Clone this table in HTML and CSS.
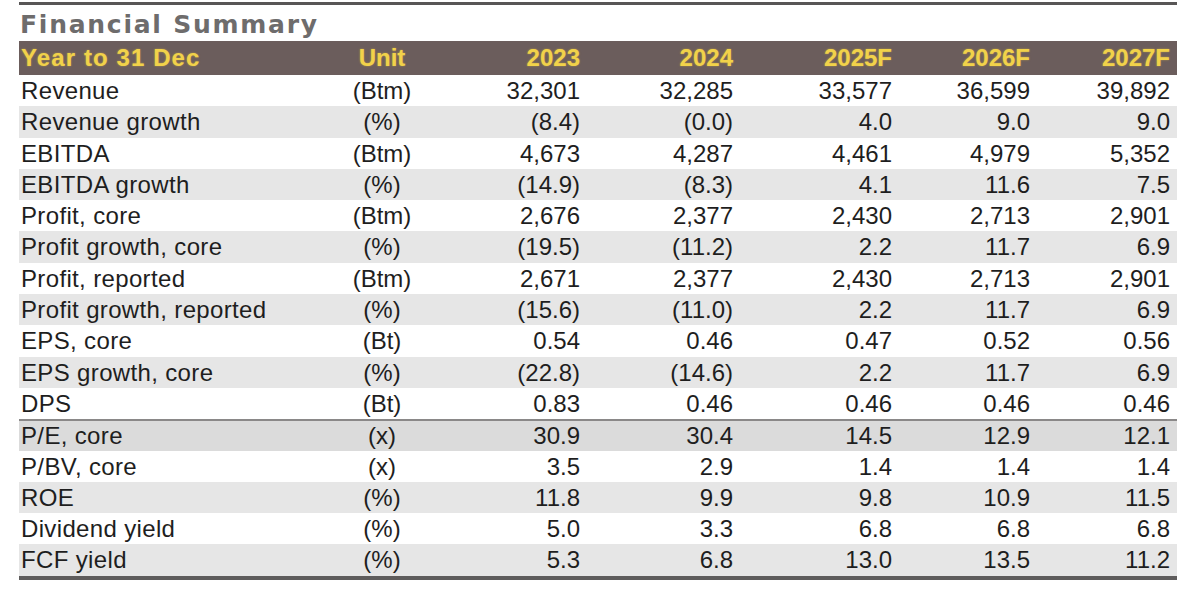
FILE: index.html
```html
<!DOCTYPE html>
<html>
<head>
<meta charset="utf-8">
<link rel="stylesheet" href="styles.css">
</head>
<body>
<div class="sheet">
  <div class="title">Financial Summary</div>
  <div class="table">
    <div class="row head">
      <div class="lab wide">Year to 31 Dec</div><div class="unit">Unit</div>
      <div class="num">2023</div><div class="num">2024</div><div class="num">2025F</div><div class="num">2026F</div><div class="num">2027F</div>
    </div>
    <div class="row">
      <div class="lab">Revenue</div><div class="unit">(Btm)</div>
      <div class="num">32,301</div><div class="num">32,285</div><div class="num">33,577</div><div class="num">36,599</div><div class="num">39,892</div>
    </div>
    <div class="row alt">
      <div class="lab">Revenue growth</div><div class="unit">(%)</div>
      <div class="num">(8.4)</div><div class="num">(0.0)</div><div class="num">4.0</div><div class="num">9.0</div><div class="num">9.0</div>
    </div>
    <div class="row">
      <div class="lab">EBITDA</div><div class="unit">(Btm)</div>
      <div class="num">4,673</div><div class="num">4,287</div><div class="num">4,461</div><div class="num">4,979</div><div class="num">5,352</div>
    </div>
    <div class="row alt">
      <div class="lab">EBITDA growth</div><div class="unit">(%)</div>
      <div class="num">(14.9)</div><div class="num">(8.3)</div><div class="num">4.1</div><div class="num">11.6</div><div class="num">7.5</div>
    </div>
    <div class="row">
      <div class="lab">Profit, core</div><div class="unit">(Btm)</div>
      <div class="num">2,676</div><div class="num">2,377</div><div class="num">2,430</div><div class="num">2,713</div><div class="num">2,901</div>
    </div>
    <div class="row alt">
      <div class="lab">Profit growth, core</div><div class="unit">(%)</div>
      <div class="num">(19.5)</div><div class="num">(11.2)</div><div class="num">2.2</div><div class="num">11.7</div><div class="num">6.9</div>
    </div>
    <div class="row">
      <div class="lab">Profit, reported</div><div class="unit">(Btm)</div>
      <div class="num">2,671</div><div class="num">2,377</div><div class="num">2,430</div><div class="num">2,713</div><div class="num">2,901</div>
    </div>
    <div class="row alt">
      <div class="lab">Profit growth, reported</div><div class="unit">(%)</div>
      <div class="num">(15.6)</div><div class="num">(11.0)</div><div class="num">2.2</div><div class="num">11.7</div><div class="num">6.9</div>
    </div>
    <div class="row">
      <div class="lab">EPS, core</div><div class="unit">(Bt)</div>
      <div class="num">0.54</div><div class="num">0.46</div><div class="num">0.47</div><div class="num">0.52</div><div class="num">0.56</div>
    </div>
    <div class="row alt">
      <div class="lab">EPS growth, core</div><div class="unit">(%)</div>
      <div class="num">(22.8)</div><div class="num">(14.6)</div><div class="num">2.2</div><div class="num">11.7</div><div class="num">6.9</div>
    </div>
    <div class="row">
      <div class="lab">DPS</div><div class="unit">(Bt)</div>
      <div class="num">0.83</div><div class="num">0.46</div><div class="num">0.46</div><div class="num">0.46</div><div class="num">0.46</div>
    </div>
    <div class="row alt sep">
      <div class="lab">P/E, core</div><div class="unit">(x)</div>
      <div class="num">30.9</div><div class="num">30.4</div><div class="num">14.5</div><div class="num">12.9</div><div class="num">12.1</div>
    </div>
    <div class="row">
      <div class="lab">P/BV, core</div><div class="unit">(x)</div>
      <div class="num">3.5</div><div class="num">2.9</div><div class="num">1.4</div><div class="num">1.4</div><div class="num">1.4</div>
    </div>
    <div class="row alt">
      <div class="lab">ROE</div><div class="unit">(%)</div>
      <div class="num">11.8</div><div class="num">9.9</div><div class="num">9.8</div><div class="num">10.9</div><div class="num">11.5</div>
    </div>
    <div class="row">
      <div class="lab">Dividend yield</div><div class="unit">(%)</div>
      <div class="num">5.0</div><div class="num">3.3</div><div class="num">6.8</div><div class="num">6.8</div><div class="num">6.8</div>
    </div>
    <div class="row alt">
      <div class="lab">FCF yield</div><div class="unit">(%)</div>
      <div class="num">5.3</div><div class="num">6.8</div><div class="num">13.0</div><div class="num">13.5</div><div class="num">11.2</div>
    </div>
  </div>
</div>
</body>
</html>
```

FILE: styles.css
```css
html, body {
  margin: 0;
  padding: 0;
  background: #ffffff;
}

.sheet {
  width: 1158px;
  margin: 2px 0 0 19px;
  border-top: 3px solid #585656;
  font-family: "Liberation Sans", Arial, sans-serif;
}

.title {
  font-family: "DejaVu Sans", sans-serif;
  font-weight: bold;
  font-size: 25px;
  letter-spacing: 1.75px;
  color: #6e6c6c;
  line-height: 33px;
  padding-top: 3px;
  padding-left: 1px;
}

.table {
  border-bottom: 4px solid #5e5c5c;
}

.row {
  display: grid;
  grid-template-columns: 300px 126px 142px 153px 159px 138px 140px;
  height: 31.3px;
  line-height: 31.3px;
  font-size: 24px;
  color: #1e1e1e;
  background: #ffffff;
}

.row.alt {
  background: #e6e6e6;
}

.row.sep {
  background: #dbdbdb;
  border-top: 2px solid #8a8888;
  height: 29.3px;
  line-height: 29.3px;
}

.row.head {
  height: 34px;
  line-height: 34px;
  background: #6b5d5c;
  color: #f1d24a;
  font-weight: bold;
  text-shadow: 0 0 2px rgba(240, 200, 60, 0.55);
}

.lab {
  padding-left: 2px;
  white-space: nowrap;
  letter-spacing: 0.35px;
}

.lab.wide {
  letter-spacing: 1.1px;
}

.unit {
  text-align: center;
}

.num {
  text-align: right;
  padding-right: 7px;
}
```
